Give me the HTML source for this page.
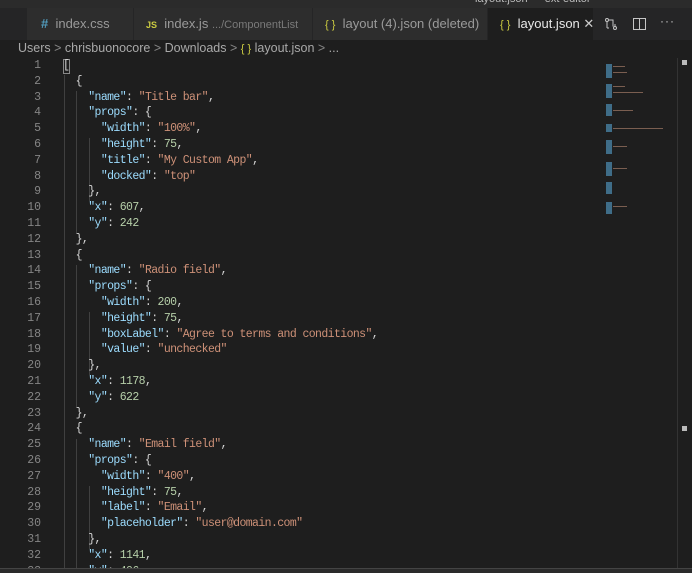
<!DOCTYPE html>
<html style="overflow:hidden"><head><meta charset="utf-8"><style>
*{margin:0;padding:0;box-sizing:border-box}
html,body{width:692px;height:573px;overflow:hidden}
body{background:#1e1e1e;font-family:"Liberation Sans",sans-serif;position:relative}
.title{position:absolute;left:0;top:0;width:692px;height:8px;background:#2b2b2b;overflow:hidden}
.title span{position:absolute;left:475px;top:-7px;font-size:11px;color:#bbb}
.tabs{position:absolute;left:0;top:8px;width:692px;height:32px;background:#252526}
.tab{position:absolute;top:0;height:32px;background:#2d2d2d;color:#9a9a9a;font-size:13px;line-height:32px;white-space:nowrap}
.tab.active{background:#1e1e1e;color:#e8e8e8}
.bc{position:absolute;left:18px;top:41px;font-size:12.5px;color:#a9a9a9;white-space:nowrap}
.code{position:absolute;left:0;top:58px;width:600px;height:510px;overflow:hidden;font-family:"Liberation Mono",monospace;font-size:11.5px;letter-spacing:-0.6px;line-height:15.8px;color:#d4d4d4}
.ln{position:absolute;left:0;top:0;width:41px;text-align:right;color:#858585;white-space:pre;letter-spacing:0}
.tx{position:absolute;left:63px;top:0;white-space:pre}
.k{color:#9cdcfe}.s{color:#ce9178}.n{color:#b5cea8}
.g{position:absolute;width:1px;background:#404040}
</style></head><body>
<div class="title"><span>layout.json — ext-editor</span></div>
<div class="tabs">
<div class="tab" style="left:27px;width:106px;padding-left:14px"><span style="color:#519aba;font-weight:bold">#</span>&nbsp; index.css</div>
<div class="tab" style="left:134px;width:178px;padding-left:12px"><span style="color:#cbcb41;font-size:9px;font-weight:bold">JS</span>&nbsp; index.js <span style="font-size:11px;color:#7a7a7a">.../ComponentList</span></div>
<div class="tab" style="left:313px;width:174px;padding-left:12px"><span style="color:#cbcb41;font-size:11px">{ }</span>&nbsp; layout (4).json (deleted)</div>
<div class="tab active" style="left:488px;width:105px;padding-left:12px"><span style="color:#cbcb41;font-size:11px">{ }</span>&nbsp; layout.json <span style="color:#ccc">✕</span></div>
<svg style="position:absolute;left:604px;top:9px" width="14" height="14" viewBox="0 0 14 14" fill="none" stroke="#c5c5c5" stroke-width="1"><circle cx="3" cy="3" r="1.5"/><circle cx="11" cy="11" r="1.5"/><path d="M3 4.5V11M5 3h4v6.5M11 9.5V7M3 11h2"/></svg>
<svg style="position:absolute;left:633px;top:10px" width="13" height="12" viewBox="0 0 13 12" fill="none" stroke="#c5c5c5"><rect x="0.5" y="0.5" width="12" height="11"/><path d="M6.5 0.5v11"/></svg>
<div style="position:absolute;left:660px;top:6px;color:#c5c5c5;font-size:12px;letter-spacing:1px">···</div>
</div>
<div class="bc">Users <span style="color:#888">&gt;</span> chrisbuonocore <span style="color:#888">&gt;</span> Downloads <span style="color:#888">&gt;</span> <span style="color:#cbcb41;font-size:11px">{ }</span> layout.json <span style="color:#888">&gt;</span> ...</div>
<div class="g" style="left:64px;top:75px;height:493px"></div>
<div class="g" style="left:76px;top:91px;height:142px"></div>
<div class="g" style="left:89px;top:138px;height:63px"></div>
<div class="g" style="left:76px;top:265px;height:142px"></div>
<div class="g" style="left:89px;top:312px;height:63px"></div>
<div class="g" style="left:76px;top:439px;height:129px"></div>
<div class="g" style="left:89px;top:486px;height:63px"></div>
<div style="position:absolute;left:63px;top:59px;width:7px;height:15px;border:1px solid #888"></div>
<div class="code"><div class="ln">1
2
3
4
5
6
7
8
9
10
11
12
13
14
15
16
17
18
19
20
21
22
23
24
25
26
27
28
29
30
31
32
33</div><div class="tx">[
  {
    <span class="k">"name"</span>: <span class="s">"Title bar"</span>,
    <span class="k">"props"</span>: {
      <span class="k">"width"</span>: <span class="s">"100%"</span>,
      <span class="k">"height"</span>: <span class="n">75</span>,
      <span class="k">"title"</span>: <span class="s">"My Custom App"</span>,
      <span class="k">"docked"</span>: <span class="s">"top"</span>
    },
    <span class="k">"x"</span>: <span class="n">607</span>,
    <span class="k">"y"</span>: <span class="n">242</span>
  },
  {
    <span class="k">"name"</span>: <span class="s">"Radio field"</span>,
    <span class="k">"props"</span>: {
      <span class="k">"width"</span>: <span class="n">200</span>,
      <span class="k">"height"</span>: <span class="n">75</span>,
      <span class="k">"boxLabel"</span>: <span class="s">"Agree to terms and conditions"</span>,
      <span class="k">"value"</span>: <span class="s">"unchecked"</span>
    },
    <span class="k">"x"</span>: <span class="n">1178</span>,
    <span class="k">"y"</span>: <span class="n">622</span>
  },
  {
    <span class="k">"name"</span>: <span class="s">"Email field"</span>,
    <span class="k">"props"</span>: {
      <span class="k">"width"</span>: <span class="s">"400"</span>,
      <span class="k">"height"</span>: <span class="n">75</span>,
      <span class="k">"label"</span>: <span class="s">"Email"</span>,
      <span class="k">"placeholder"</span>: <span class="s">"user@domain.com"</span>
    },
    <span class="k">"x"</span>: <span class="n">1141</span>,
    <span class="k">"y"</span>: <span class="n">406</span></div></div>
<svg style="position:absolute;left:603px;top:60px" width="65" height="160">
<g fill="#3f6d88"><rect x="3" y="4" width="6" height="14"/><rect x="3" y="24" width="6" height="14"/><rect x="3" y="44" width="6" height="12"/><rect x="3" y="64" width="6" height="8"/><rect x="3" y="80" width="6" height="14"/><rect x="3" y="102" width="6" height="14"/><rect x="3" y="122" width="6" height="12"/><rect x="3" y="142" width="6" height="12"/></g>
<g fill="#7a5e50"><rect x="10" y="6" width="12" height="1"/><rect x="10" y="12" width="14" height="1"/><rect x="10" y="26" width="12" height="1"/><rect x="10" y="32" width="30" height="1"/><rect x="10" y="50" width="20" height="1"/><rect x="10" y="68" width="50" height="1"/><rect x="10" y="86" width="14" height="1"/><rect x="10" y="108" width="14" height="1"/><rect x="10" y="146" width="14" height="1"/></g>
</svg>
<div style="position:absolute;left:677px;top:58px;width:1px;height:510px;background:#333"></div>
<div style="position:absolute;left:682px;top:60px;width:5px;height:5px;background:#bbb"></div>
<div style="position:absolute;left:682px;top:426px;width:5px;height:5px;background:#bbb"></div>
<div style="position:absolute;left:0;top:568px;width:692px;height:5px;background:#2a2a2a;border-top:1px solid #444"></div>
</body></html>
